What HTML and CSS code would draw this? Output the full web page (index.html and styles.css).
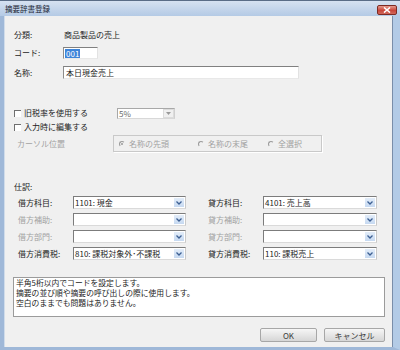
FILE: index.html
```html
<!DOCTYPE html>
<html lang="ja">
<head>
    <meta charset="UTF-8">
    <title>摘要辞書登録</title>
    <link rel="stylesheet" href="styles.css">
</head>
<body>
    <div class="window">
        <div class="titlebar">
            <span class="title">摘要辞書登録</span>
            <span class="close-btn">
                <svg width="8" height="6" viewBox="0 0 8 6"><path d="M1 0.5 L7 5.5 M7 0.5 L1 5.5" stroke="#fff" stroke-width="1.6"/></svg>
            </span>
        </div>
        <div class="frame">
            <div class="client">
                <div class="row row-class">
                    <span class="label">分類:</span>
                    <span class="value">商品製品の売上</span>
                </div>
                <div class="row row-code">
                    <span class="label">コード:</span>
                    <span class="input input-code"><span class="selected">001</span></span>
                </div>
                <div class="row row-name">
                    <span class="label">名称:</span>
                    <span class="input input-name">本日現金売上</span>
                </div>

                <div class="row row-check1">
                    <span class="check-label"><span class="checkbox"></span>旧税率を使用する</span>
                    <span class="combo combo-rate disabled">
                        <span class="val">5%</span>
                        <span class="btn"><svg width="5" height="3" viewBox="0 0 5 3"><path d="M0 0 H5 L2.5 3 Z" fill="#9a9a9a"/></svg></span>
                    </span>
                </div>
                <div class="row row-check2">
                    <span class="check-label"><span class="checkbox"></span>入力時に編集する</span>
                </div>
                <div class="row row-cursor">
                    <span class="cursor-label">カーソル位置</span>
                    <div class="groupbox">
                        <span class="radio-opt opt1"><span class="radio checked"></span>名称の先頭</span>
                        <span class="radio-opt opt2"><span class="radio"></span>名称の末尾</span>
                        <span class="radio-opt opt3"><span class="radio"></span>全選択</span>
                    </div>
                </div>

                <div class="row row-journal">
                    <span class="label">仕訳:</span>
                </div>
                <div class="journal">
                    <span class="jlabel">借方科目:</span>
                    <span class="combo"><span class="val">1101: 現金</span><span class="btn"><svg width="6" height="4" viewBox="0 0 6 4"><path d="M0.5 0.5 L3 3 L5.5 0.5" fill="none" stroke="#3c5f93" stroke-width="1.3"/></svg></span></span>
                    <span class="jlabel right">貸方科目:</span>
                    <span class="combo"><span class="val">4101: 売上高</span><span class="btn"><svg width="6" height="4" viewBox="0 0 6 4"><path d="M0.5 0.5 L3 3 L5.5 0.5" fill="none" stroke="#3c5f93" stroke-width="1.3"/></svg></span></span>

                    <span class="jlabel muted">借方補助:</span>
                    <span class="combo"><span class="val"></span><span class="btn"><svg width="6" height="4" viewBox="0 0 6 4"><path d="M0.5 0.5 L3 3 L5.5 0.5" fill="none" stroke="#3c5f93" stroke-width="1.3"/></svg></span></span>
                    <span class="jlabel right muted">貸方補助:</span>
                    <span class="combo"><span class="val"></span><span class="btn"><svg width="6" height="4" viewBox="0 0 6 4"><path d="M0.5 0.5 L3 3 L5.5 0.5" fill="none" stroke="#3c5f93" stroke-width="1.3"/></svg></span></span>

                    <span class="jlabel muted">借方部門:</span>
                    <span class="combo"><span class="val"></span><span class="btn"><svg width="6" height="4" viewBox="0 0 6 4"><path d="M0.5 0.5 L3 3 L5.5 0.5" fill="none" stroke="#3c5f93" stroke-width="1.3"/></svg></span></span>
                    <span class="jlabel right muted">貸方部門:</span>
                    <span class="combo"><span class="val"></span><span class="btn"><svg width="6" height="4" viewBox="0 0 6 4"><path d="M0.5 0.5 L3 3 L5.5 0.5" fill="none" stroke="#3c5f93" stroke-width="1.3"/></svg></span></span>

                    <span class="jlabel">借方消費税:</span>
                    <span class="combo"><span class="val">810: 課税対象外･不課税</span><span class="btn"><svg width="6" height="4" viewBox="0 0 6 4"><path d="M0.5 0.5 L3 3 L5.5 0.5" fill="none" stroke="#3c5f93" stroke-width="1.3"/></svg></span></span>
                    <span class="jlabel right">貸方消費税:</span>
                    <span class="combo"><span class="val">110: 課税売上</span><span class="btn"><svg width="6" height="4" viewBox="0 0 6 4"><path d="M0.5 0.5 L3 3 L5.5 0.5" fill="none" stroke="#3c5f93" stroke-width="1.3"/></svg></span></span>
                </div>

                <div class="memo">
                    <p>半角5桁以内でコードを設定します。</p>
                    <p>摘要の並び順や摘要の呼び出しの際に使用します。</p>
                    <p>空白のままでも問題はありません。</p>
                </div>

                <div class="buttons">
                    <span class="button btn-ok">OK</span>
                    <span class="button btn-cancel">キャンセル</span>
                </div>
            </div>
        </div>
    </div>
</body>
</html>
```

FILE: styles.css
```css
body {
    margin: 0;
    padding: 0;
    font-family: "Noto Sans CJK JP", "Liberation Sans", sans-serif;
    font-size: 8px;
    color: #1c1c1c;
    background-color: #f0f0f0;
}
p {
    margin: 0;
}
.window {
    width: 400px;
    height: 350px;
    display: flex;
    flex-direction: column;
    background: #b9cde6;
}
.titlebar {
    height: 16px;
    display: flex;
    align-items: center;
    justify-content: space-between;
    border-top: 1px solid #5a6d86;
    box-sizing: border-box;
    background: linear-gradient(#d6e2f1, #b4cae5);
}
.title {
    margin-left: 5px;
    font-size: 7.5px;
    line-height: 10px;
    color: #1a2433;
}
.close-btn {
    width: 20px;
    height: 10px;
    margin-right: 3px;
    margin-top: 2px;
    display: flex;
    align-items: center;
    justify-content: center;
    box-sizing: border-box;
    border: 1px solid #7d2b23;
    border-radius: 2px;
    background: linear-gradient(#e59a8e, #c9463a 55%, #d0675a);
}
.frame {
    flex: 1;
    display: flex;
    border-left: 4px solid #9fb8d8;
    border-right: 7px solid #b3cbe6;
    border-bottom: 3px solid #9fb8d8;
    background: #f0f0f0;
}
.client {
    flex: 1;
    padding: 13px 7px 0 8px;
    border-right: 1px solid #7a8ea9;
    border-left: 1px solid #d0dcea;
    display: flex;
    flex-direction: column;
}
.row {
    display: flex;
    align-items: center;
    height: 12px;
    line-height: 10px;
}
.label {
    width: 49px;
    padding-left: 1px;
}
.value {
    margin-left: 1px;
}
.row-code {
    margin-top: 6px;
}
.row-name {
    margin-top: 7px;
    height: 13px;
}
.input {
    box-sizing: border-box;
    height: 12px;
    background: #fff;
    border: 1px solid;
    border-color: #808080 #e2e2e2 #e8e8e8 #8c8c8c;
    display: flex;
    align-items: center;
    padding-left: 1px;
}
.input-code {
    width: 35px;
}
.selected {
    background: #3d84d9;
    color: #fff;
    padding: 0 1px;
    line-height: 9px;
}
.input-name {
    width: 236px;
    height: 13px;
    padding-left: 2px;
}
.row-check1 {
    margin-top: 28px;
}
.row-check2 {
    margin-top: 2px;
}
.check-label {
    width: 103px;
    display: flex;
    align-items: center;
    padding-left: 1px;
}
.checkbox {
    width: 7px;
    height: 7px;
    box-sizing: border-box;
    border-top: 1px solid #6f6f6f;
    border-left: 1px solid #6f6f6f;
    background: #fff;
    margin-right: 3px;
}
.combo {
    box-sizing: border-box;
    height: 13px;
    display: flex;
    align-items: stretch;
    background: #fff;
    border: 1px solid;
    border-color: #7c7c7c #c9c9c9 #dadada #7c7c7c;
}
.combo .val {
    flex: 1;
    padding-left: 1px;
    line-height: 11px;
    white-space: nowrap;
    overflow: hidden;
}
.combo .btn {
    width: 10px;
    margin: 1px;
    display: flex;
    align-items: center;
    justify-content: center;
    background: linear-gradient(#e3edf9, #c6d9f1);
}
.combo-rate {
    width: 58px;
    height: 11px;
    border-color: #a8a8a8 #d0d0d0 #d8d8d8 #a8a8a8;
}
.combo-rate .val {
    line-height: 9px;
    color: #6a6a6a;
}
.combo-rate .btn {
    width: 9px;
    background: #f0f0f0;
    border: 1px solid #dcdcdc;
    margin: 0;
}
.row-cursor {
    margin-top: 2px;
    height: 17px;
}
.cursor-label {
    width: 96px;
    margin-left: 4px;
    color: #a2a2a2;
}
.groupbox {
    width: 209px;
    height: 17px;
    box-sizing: border-box;
    border: 1px solid #c9c9c9;
    box-shadow: 1px 1px 0 #fff;
    display: flex;
    align-items: center;
    padding-left: 5px;
    color: #a2a2a2;
}
.radio-opt {
    display: flex;
    align-items: center;
}
.opt1 {
    width: 79px;
}
.opt2 {
    width: 70px;
}
.radio {
    width: 6px;
    height: 6px;
    box-sizing: border-box;
    border-radius: 50%;
    border: 1px solid;
    border-color: #9a9a9a transparent transparent #9a9a9a;
    margin-right: 4px;
    position: relative;
}
.radio.checked::after {
    content: "";
    position: absolute;
    left: 1px;
    top: 1px;
    width: 2px;
    height: 2px;
    border-radius: 50%;
    background: #9a9a9a;
}
.row-journal {
    margin-top: 29px;
}
.journal {
    margin-top: 3px;
    margin-left: 5px;
    display: grid;
    grid-template-columns: 55px 113px 77px 114px;
    grid-auto-rows: 13px;
    row-gap: 4px;
    line-height: 13px;
}
.jlabel {
    white-space: nowrap;
}
.jlabel.right {
    padding-left: 22px;
}
.muted {
    color: #a2a2a2;
}
.memo {
    margin-top: 17px;
    height: 40px;
    box-sizing: border-box;
    border: 1px solid #9b9b9b;
    background: #fff;
    padding: 0 2px;
    font-size: 7.8px;
    line-height: 10px;
}
.buttons {
    margin-top: 11px;
    display: flex;
    justify-content: flex-end;
    gap: 7px;
}
.button {
    height: 14px;
    box-sizing: border-box;
    display: flex;
    align-items: center;
    justify-content: center;
    border: 1px solid #a7a7a7;
    border-radius: 2px;
    background: linear-gradient(#f6f6f6, #e6e6e6 50%, #d6d6d6);
    color: #3a3a3a;
}
.btn-ok {
    width: 57px;
}
.btn-cancel {
    width: 61px;
}
```
